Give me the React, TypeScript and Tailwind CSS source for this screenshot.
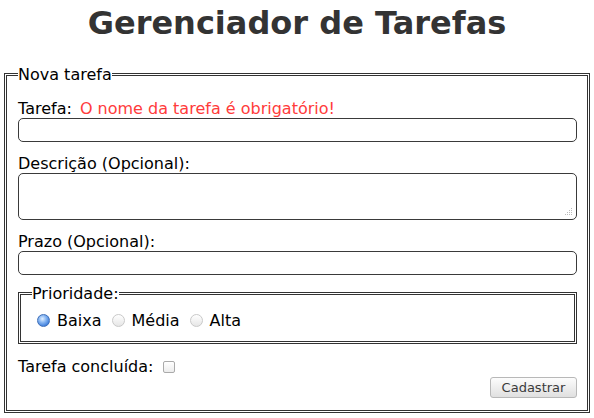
const prioridades = ["Baixa", "Média", "Alta"];

const Radio = ({ checked }: { checked?: boolean }) => {
	if (checked) {
		return (
			<span className="ml-[5px] mr-[7px] inline-block h-[13px] w-[13px] shrink-0 rounded-full border border-[#3f6fb8] bg-[radial-gradient(circle_at_40%_35%,#e4f0ff_0%,#8dbaf3_35%,#3f7fdc_75%,#2a62c2_100%)]"></span>
		);
	}
	return (
		<span className="ml-[5px] mr-[7px] inline-block h-[13px] w-[13px] shrink-0 rounded-full border border-[#c9c9c9] bg-[linear-gradient(#ffffff,#e6e6e6)]"></span>
	);
};

const App = () => {
	return (
		<div className="min-h-[418px] bg-white pt-[5px] font-['DejaVu_Sans',sans-serif] text-[16px] text-black">
			<h1 className="text-center text-[32px] font-bold leading-[37px] text-[#333]">
				Gerenciador de Tarefas
			</h1>
			<form className="mx-[4px] mt-[23px]">
				<fieldset className="border-[3px] border-double border-[#333] pl-[11px] pr-[10px] pb-[12px]">
					<legend className="leading-[19px]">Nova tarefa</legend>

					<label className="mt-[15px] block leading-[19px]">
						Tarefa: <span className="ml-[3px] text-[#ff3b3b]">O nome da tarefa é obrigatório!</span>
					</label>
					<div className="h-[24px] w-full rounded-[5px] border border-[#3a3a3a]"></div>

					<label className="mt-[12px] block leading-[19px]">Descrição (Opcional):</label>
					<div className="relative h-[47px] w-full rounded-[5px] border border-[#3a3a3a]">
						{/* resize grip */}
						<svg className="absolute bottom-[3px] right-[3px]" width="9" height="9" viewBox="0 0 9 9">
							<rect x="7" y="1" width="1" height="1" fill="#bbb" />
							<rect x="5" y="3" width="1" height="1" fill="#bbb" />
							<rect x="7" y="3" width="1" height="1" fill="#bbb" />
							<rect x="3" y="5" width="1" height="1" fill="#bbb" />
							<rect x="5" y="5" width="1" height="1" fill="#bbb" />
							<rect x="7" y="5" width="1" height="1" fill="#bbb" />
							<rect x="1" y="7" width="1" height="1" fill="#bbb" />
							<rect x="3" y="7" width="1" height="1" fill="#bbb" />
							<rect x="5" y="7" width="1" height="1" fill="#bbb" />
							<rect x="7" y="7" width="1" height="1" fill="#bbb" />
						</svg>
					</div>

					<label className="mt-[12px] block leading-[19px]">Prazo (Opcional):</label>
					<div className="h-[24px] w-full rounded-[5px] border border-[#3a3a3a]"></div>

					<fieldset className="mt-[9px] border-[3px] border-double border-[#333] pl-[11px] pb-[11px]">
						<legend className="leading-[19px]">Prioridade:</legend>
						<div className="mt-[8px] flex h-[19px] items-center gap-[5px]">
							{prioridades.map((p, i) => (
								<span key={i} className="flex items-center leading-[19px]">
									<Radio checked={i === 0} />
									{p}
								</span>
							))}
						</div>
					</fieldset>

					<div className="mt-[13px] flex h-[19px] items-center leading-[19px]">
						Tarefa concluída:
						<span className="ml-[10px] inline-block h-[12px] w-[12px] rounded-[2px] border border-[#aaa] bg-[linear-gradient(#ffffff,#ececec)]"></span>
					</div>

					<div className="mt-[1px] flex justify-end">
						<button
							type="button"
							className="h-[21px] w-[87px] rounded-[3px] border border-[#b8b8b8] bg-[linear-gradient(#fcfcfc,#e0e0e0)] text-[13px] leading-[19px] text-[#3a3a3a]"
						>
							Cadastrar
						</button>
					</div>
				</fieldset>
			</form>
		</div>
	);
};

export default App;
